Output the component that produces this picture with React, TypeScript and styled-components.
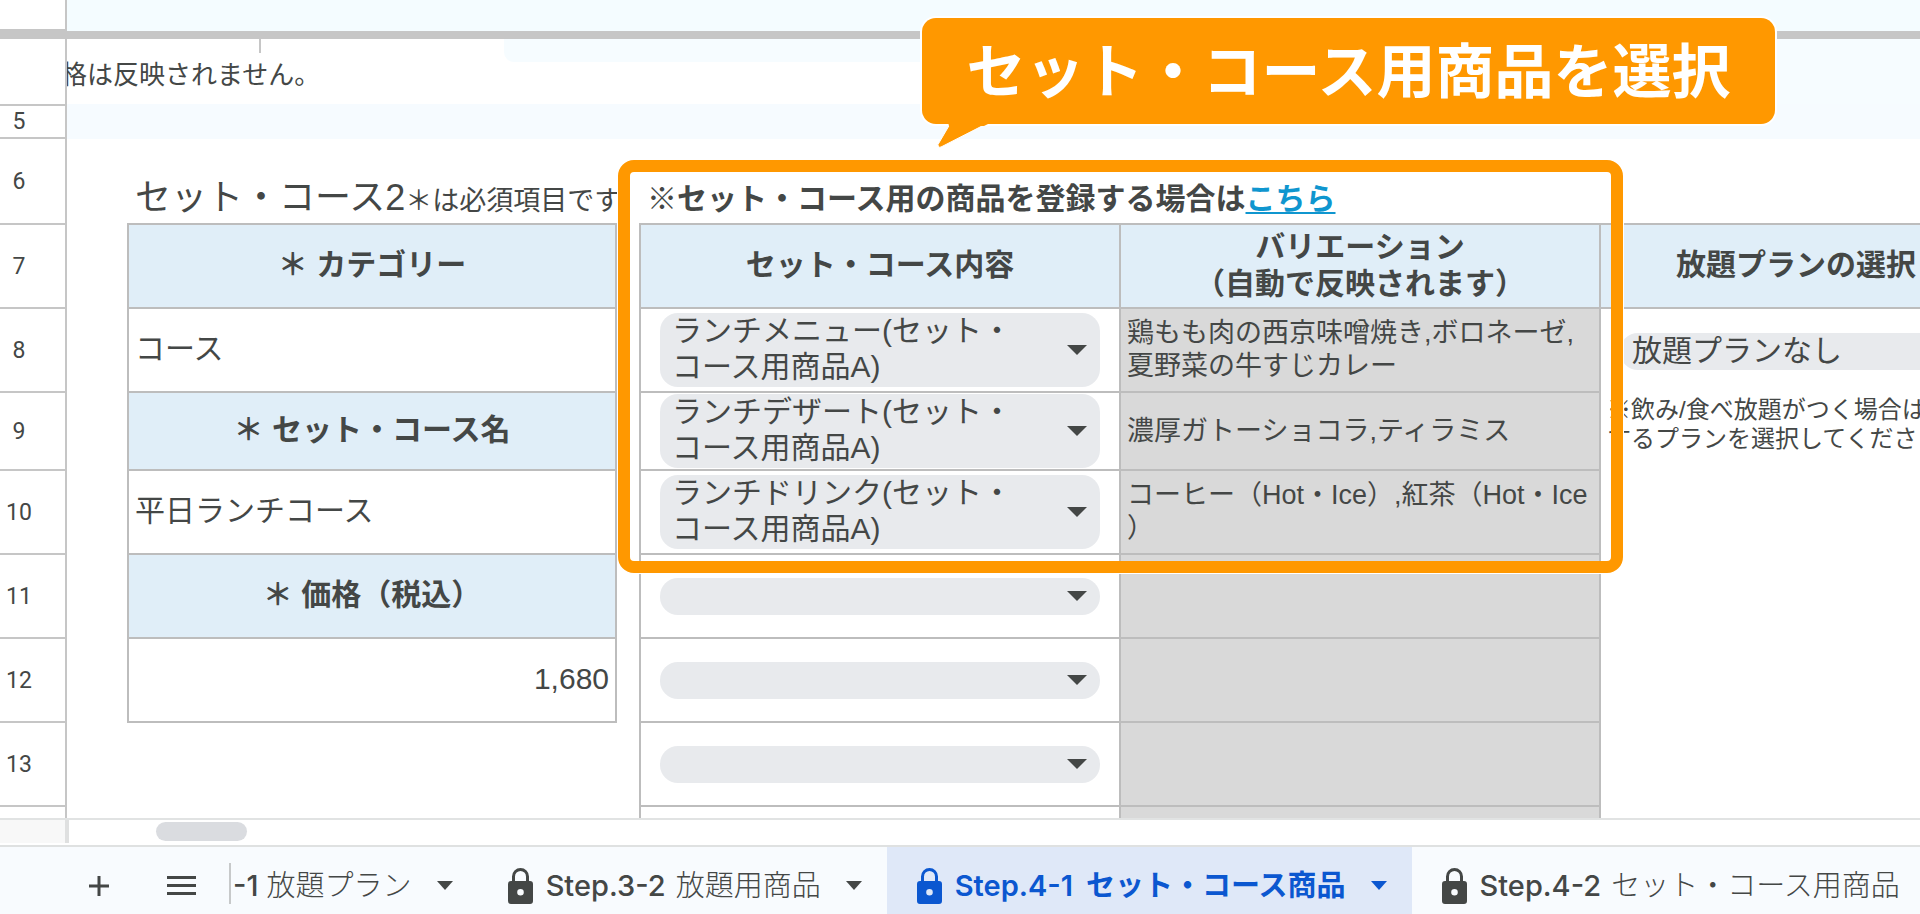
import React from "react";
import styled, { createGlobalStyle, css } from "styled-components";

const ink = "#444746";
const line = "#bdbdbd";
const orange = "#ff9800";
const headFill = "#e0eef8";
const active = "#0b57d0";

const GlobalStyle = createGlobalStyle`
  *, *::before, *::after { box-sizing: border-box; }
  body {
    margin: 0;
    background: #fff;
    color: ${ink};
    font-family: "Liberation Sans", "Noto Sans CJK JP", sans-serif;
  }
  button, select { font: inherit; color: inherit; border: 0; margin: 0; padding: 0; background: none; }
`;

const Page = styled.div`
  display: flex;
  flex-direction: column;
  height: 100vh;
  overflow: hidden;
`;

const Sheet = styled.main`
  flex: 1;
  min-height: 0;
  overflow: hidden;
`;

const FrozenRow = styled.div`
  display: flex;
  height: 31px;
  background: #f4fcff;
`;

const FrozenCorner = styled.div`
  width: 67px;
  background: #fff;
  border: solid #c6c6c6;
  border-width: 0 2px 2px 0;
`;

const FreezeBar = styled.div`
  height: 8px;
  background: #c6c6c6;
`;

const Body = styled.div`
  display: flex;
`;

const RowNumbers = styled.div`
  flex: none;
  width: 67px;
  background: #fff;
  border-right: 2px solid #c6c6c6;
  font-family: Roboto, sans-serif;
  font-size: 23px;
`;

const RowNumber = styled.div<{ $height: number }>`
  display: flex;
  align-items: center;
  justify-content: center;
  height: ${(p) => p.$height}px;
  padding-right: 27px;
  border-bottom: 2px solid #c6c6c6;
`;

const Cells = styled.div`
  flex: 1;
  min-width: 0;
`;

const NoteRow = styled.div`
  display: flex;
  height: 65px;
  background: #f6fcff;
`;

const NoteCell = styled.div`
  width: 883px;
  overflow: hidden;
  background: #fff;
`;

const NoteTop = styled.div`
  display: flex;
  height: 23px;
`;

const Tick = styled.div`
  width: 194px;
  height: 14px;
  border-right: 2px solid #c6c6c6;
`;

const Notch = styled.div`
  flex: 1;
  margin-left: 243px;
  border-bottom-left-radius: 10px;
  background: #f6fcff;
`;

const NoteText = styled.p`
  margin: 0 0 0 -6px;
  font-size: 26px;
  line-height: 26px;
  white-space: nowrap;
`;

const Band = styled.div`
  height: 35px;
  background: #f6fbff;
`;

const Blocks = styled.div`
  display: flex;
  gap: 22px;
  padding-left: 60px;
`;

const CourseBlock = styled.section`
  flex: none;
  width: 490px;
`;

const ItemsBlock = styled.section`
  position: relative;
  flex: none;
  width: 1354px;
`;

const Caption = styled.div`
  display: flex;
  align-items: flex-end;
  height: 84px;
  padding: 0 0 6px 8px;
  white-space: nowrap;
`;

const CourseTitle = styled.h2`
  margin: 0;
  font-size: 36px;
  font-weight: 400;
  line-height: 32px;

  small { font-size: 27px; }
`;

const Notice = styled.p`
  margin: 0;
  font-size: 30px;
  font-weight: 700;
  line-height: 37px;
`;

const NoticeLink = styled.a`
  color: #0f96cf;
  text-decoration: underline;
  text-decoration-thickness: 2px;
  text-underline-offset: 3px;
`;

const Grid = styled.table`
  width: 100%;
  table-layout: fixed;
  border-collapse: separate;
  border-spacing: 0;
  border-top: 2px solid ${line};
  border-left: 2px solid ${line};
  font-size: 30px;
  line-height: 37px;
`;

const Row = styled.tr<{ $height?: number }>`
  height: ${(p) => p.$height ?? 84}px;
`;

const cell = css`
  padding: 0 6px 3px;
  border: solid ${line};
  border-width: 0 2px 2px 0;
`;

const Head = styled.th`
  ${cell}
  background: ${headFill};
  font-weight: 700;
  white-space: nowrap;
`;

const Value = styled.td<{ $right?: boolean }>`
  ${cell}
  text-align: ${(p) => (p.$right ? "right" : "left")};
`;

const PickCell = styled.td<{ $open?: boolean }>`
  ${cell}
  padding: 0 19px;
  ${(p) => p.$open && "border: 0;"}
`;

const AutoCell = styled.td`
  ${cell}
  padding: 0 0 0 6px;
  background: #d9d9d9;
  font-size: 27px;
  line-height: 33px;
  white-space: nowrap;
`;

const HintCell = styled.td`
  padding: 2px 0 0 6px;
  vertical-align: top;
  font-size: 24px;
  line-height: 29px;
  white-space: nowrap;
`;

const Chip = styled.div`
  position: relative;
  display: flex;
  border-radius: 18px;
  background: #e8eaed;
`;

const ChipSelect = styled.select<{ $tall?: boolean }>`
  appearance: none;
  width: 100%;
  height: ${(p) => (p.$tall ? 74 : 37)}px;
  padding: 0 80px 2px 12px;
  border-radius: 18px;
  line-height: 36px;
  white-space: normal;
  text-wrap: wrap;
`;

const ChipArrow = styled.svg`
  position: absolute;
  top: 50%;
  right: 13px;
  margin-top: -5px;
  pointer-events: none;
`;

const Highlight = styled.div`
  position: absolute;
  top: 21px;
  left: -21px;
  width: 1005px;
  height: 413px;
  border: 12px solid ${orange};
  border-radius: 16px;
  box-shadow: 0 0 0 1px #fff;
  pointer-events: none;
`;

const Callout = styled.div`
  position: absolute;
  top: -121px;
  left: 283px;
  display: flex;
  align-items: center;
  justify-content: center;
  width: 853px;
  height: 106px;
  padding-top: 4px;
  border-radius: 14px;
  background: ${orange};
  box-shadow: 0 0 0 2px #fff;
  color: #fff;
  font-size: 59px;
  font-weight: 700;
  line-height: 60px;
  white-space: nowrap;
`;

const CalloutTail = styled.svg`
  position: absolute;
  top: 100%;
  left: 12px;
  margin-top: -2px;
`;

const ScrollRow = styled.div`
  display: flex;
  flex: none;
  height: 27px;
  border-top: 2px solid #e1e3e3;
  background: #fff;
`;

const ScrollCorner = styled.div`
  width: 69px;
  height: 23px;
  border-right: 4px solid #dfe0e0;
  background: #f8f8f8;
`;

const ScrollThumb = styled.div`
  width: 91px;
  height: 19px;
  margin: 2px 0 0 87px;
  border-radius: 10px;
  background: #dadce0;
`;

const TabBar = styled.nav`
  display: flex;
  flex: none;
  height: 69px;
  overflow: hidden;
  border-top: 2px solid #dfe1e1;
  background: #f8fbfe;
`;

const Tool = styled.button<{ $before: number }>`
  display: flex;
  flex: none;
  align-items: center;
  margin-left: ${(p) => p.$before}px;
  padding-top: 10px;
`;

const Divider = styled.div`
  flex: none;
  width: 2px;
  height: 41px;
  margin: 16px 0 0 33px;
  background: #c7c9ca;
`;

const Tab = styled.button<{ $active?: boolean; $cut?: boolean }>`
  display: flex;
  flex: none;
  align-items: center;
  padding: 10px 25px 0 ${(p) => (p.$cut ? 2 : 30)}px;
  background: ${(p) => (p.$active ? "#dfe8f8" : "transparent")};
  color: ${(p) => (p.$active ? active : ink)};
  white-space: nowrap;

  > svg { flex: none; }
`;

const TabText = styled.span<{ $bold?: boolean }>`
  margin: 0 25px 0 13px;
  font-family: Inter, "Noto Sans CJK JP", sans-serif;
  font-size: 29px;
  font-weight: ${(p) => (p.$bold ? 700 : 300)};
  line-height: 36px;

  b {
    margin-right: ${(p) => (p.$bold ? 6 : 2)}px;
    font-weight: ${(p) => (p.$bold ? 600 : 500)};
  }
`;

const CutTabText = styled(TabText)`
  margin-left: 0;

  b { margin-right: 0; }
`;

const Lock = () => (
  <svg width="25" height="36" viewBox="0 0 25 36" fill="currentColor" aria-hidden="true">
    <path
      fillRule="evenodd"
      d="M4 13V8.500a8.500 8.500 0 0 1 17 0V13h1a3 3 0 0 1 3 3v17a3 3 0 0 1-3 3H3a3 3 0 0 1-3-3V16a3 3 0 0 1 3-3zM7 13h11V8.500a5.500 5.500 0 0 0-11 0zM12.500 21a3.300 3.300 0 1 0 0 6.600a3.300 3.300 0 0 0 0-6.600z"
    />
  </svg>
);

const TabArrow = () => (
  <svg width="16" height="9" viewBox="0 0 16 9" fill="currentColor" aria-hidden="true">
    <path d="M0 0h16L8 9z" />
  </svg>
);

type DropProps = { label: string; value?: string; tall?: boolean; arrow?: boolean };

const Drop = ({ label, value = "", tall, arrow = true }: DropProps) => (
  <Chip>
    <ChipSelect aria-label={label} $tall={tall} defaultValue={value}>
      <option value={value}>{value}</option>
    </ChipSelect>
    {arrow && (
      <ChipArrow width="20" height="10" viewBox="0 0 20 10" fill={ink} aria-hidden="true">
        <path d="M0 0h20L10 10z" />
      </ChipArrow>
    )}
  </Chip>
);

const rowHeights: [string, number][] = [
  ["", 67],
  ["5", 33],
  ["6", 86],
  ["7", 84],
  ["8", 84],
  ["9", 78],
  ["10", 84],
  ["11", 84],
  ["12", 84],
  ["13", 84],
];

export default function App() {
  return (
    <Page>
      <GlobalStyle />
      <Sheet>
        <FrozenRow>
          <FrozenCorner />
        </FrozenRow>
        <FreezeBar />
        <Body>
          <RowNumbers>
            {rowHeights.map(([n, h]) => (
              <RowNumber key={n} $height={h}>
                {n}
              </RowNumber>
            ))}
          </RowNumbers>
          <Cells>
            <NoteRow>
              <NoteCell>
                <NoteTop>
                  <Tick />
                  <Notch />
                </NoteTop>
                <NoteText>格は反映されません。</NoteText>
              </NoteCell>
            </NoteRow>
            <Band />
            <Blocks>
              <CourseBlock>
                <Caption>
                  <CourseTitle>
                    セット・コース2<small>＊は必須項目です</small>
                  </CourseTitle>
                </Caption>
                <Grid>
                  <tbody>
                    <Row><Head scope="row">＊ カテゴリー</Head></Row>
                    <Row><Value>コース</Value></Row>
                    <Row $height={78}><Head scope="row">＊ セット・コース名</Head></Row>
                    <Row><Value>平日ランチコース</Value></Row>
                    <Row><Head scope="row">＊ 価格（税込）</Head></Row>
                    <Row><Value $right>1,680</Value></Row>
                  </tbody>
                </Grid>
              </CourseBlock>

              <ItemsBlock>
                <Caption>
                  <Notice>
                    ※セット・コース用の商品を登録する場合は<NoticeLink href="#items">こちら</NoticeLink>
                  </Notice>
                </Caption>
                <Grid>
                  <colgroup>
                    <col width="480" />
                    <col width="480" />
                    <col />
                  </colgroup>
                  <thead>
                    <Row>
                      <Head scope="col">セット・コース内容</Head>
                      <Head scope="col">
                        バリエーション
                        <br />
                        （自動で反映されます）
                      </Head>
                      <Head scope="col">放題プランの選択</Head>
                    </Row>
                  </thead>
                  <tbody>
                    <Row>
                      <PickCell><Drop tall label="内容 1" value="ランチメニュー(セット・コース用商品A)" /></PickCell>
                      <AutoCell>
                        鶏もも肉の西京味噌焼き,ボロネーゼ,
                        <br />
                        夏野菜の牛すじカレー
                      </AutoCell>
                      <PickCell $open><Drop arrow={false} label="放題プラン" value="放題プランなし" /></PickCell>
                    </Row>
                    <Row $height={78}>
                      <PickCell><Drop tall label="内容 2" value="ランチデザート(セット・コース用商品A)" /></PickCell>
                      <AutoCell>濃厚ガトーショコラ,ティラミス</AutoCell>
                      <HintCell>
                        ※飲み/食べ放題がつく場合は
                        <br />
                        するプランを選択してくださ
                      </HintCell>
                    </Row>
                    <Row>
                      <PickCell><Drop tall label="内容 3" value="ランチドリンク(セット・コース用商品A)" /></PickCell>
                      <AutoCell>
                        コーヒー（Hot・Ice）,紅茶（Hot・Ice
                        <br />）
                      </AutoCell>
                      <td />
                    </Row>
                    {[4, 5, 6, 7].map((n) => (
                      <Row key={n}>
                        <PickCell><Drop label={`内容 ${n}`} /></PickCell>
                        <AutoCell />
                        <td />
                      </Row>
                    ))}
                  </tbody>
                </Grid>
                <Highlight />
                <Callout>
                  セット・コース用商品を選択
                  <CalloutTail width="56" height="28" viewBox="0 0 56 28" aria-hidden="true">
                    <path d="M16 2L4 22.500Q4 26 7 25L52 2" fill={orange} stroke="#fff" strokeWidth="1" />
                    <path d="M14 0h40v2l-4 2H15z" fill={orange} />
                  </CalloutTail>
                </Callout>
              </ItemsBlock>
            </Blocks>
          </Cells>
        </Body>
      </Sheet>

      <ScrollRow>
        <ScrollCorner />
        <ScrollThumb />
      </ScrollRow>

      <TabBar>
        <Tool $before={89} aria-label="シートを追加">
          <svg width="20" height="20" viewBox="0 0 20 20" stroke={ink} strokeWidth="3" aria-hidden="true">
            <path d="M10 0v20M0 10h20" />
          </svg>
        </Tool>
        <Tool $before={58} aria-label="すべてのシート">
          <svg width="29" height="19" viewBox="0 0 29 19" stroke={ink} strokeWidth="3" aria-hidden="true">
            <path d="M0 1.500h29M0 9.500h29M0 17.500h29" />
          </svg>
        </Tool>
        <Divider />
        <Tab $cut>
          <CutTabText><b>-1</b> 放題プラン</CutTabText>
          <TabArrow />
        </Tab>
        <Tab>
          <Lock />
          <TabText><b>Step.3-2</b> 放題用商品</TabText>
          <TabArrow />
        </Tab>
        <Tab $active>
          <Lock />
          <TabText $bold><b>Step.4-1</b> セット・コース商品</TabText>
          <TabArrow />
        </Tab>
        <Tab>
          <Lock />
          <TabText><b>Step.4-2</b> セット・コース用商品</TabText>
        </Tab>
      </TabBar>
    </Page>
  );
}
